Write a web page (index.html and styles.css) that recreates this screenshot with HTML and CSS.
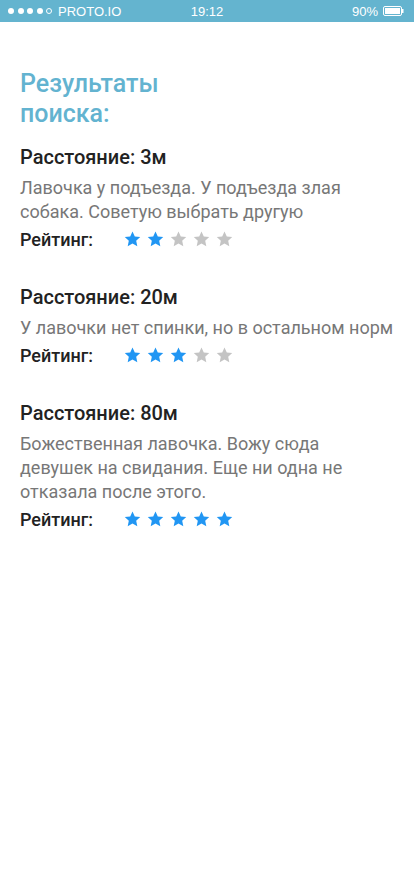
FILE: index.html
```html
<!DOCTYPE html>
<html lang="ru">
<head>
<meta charset="utf-8">
<link rel="stylesheet" href="styles.css">
</head>
<body>
<div class="status">
  <div class="status-left"><span class="dots"><i class="d"></i><i class="d"></i><i class="d"></i><i class="d"></i><i class="d o"></i></span><span class="carrier">PROTO.IO</span></div>
  <div class="status-time">19:12</div>
  <div class="status-right"><span>90%</span><svg class="battery" width="21" height="10" viewBox="0 0 21 10"><rect x="0.5" y="0.5" width="18" height="9" rx="1.5" fill="none" stroke="#fff"/><rect x="2" y="2" width="15" height="6" fill="#fff"/><rect x="19" y="3" width="1.5" height="4" fill="#fff"/></svg></div>
</div>
<main class="content">
  <h1 class="title">Результаты<br>поиска:</h1>
  <section class="item">
    <h2 class="dist">Расстояние: 3м</h2>
    <p class="desc">Лавочка у подъезда. У подъезда злая собака. Советую выбрать другую</p>
    <div class="rating"><span class="label">Рейтинг:</span><span class="stars" data-n="2"></span></div>
  </section>
  <section class="item">
    <h2 class="dist">Расстояние: 20м</h2>
    <p class="desc">У лавочки нет спинки, но в остальном норм</p>
    <div class="rating"><span class="label">Рейтинг:</span><span class="stars" data-n="3"></span></div>
  </section>
  <section class="item">
    <h2 class="dist">Расстояние: 80м</h2>
    <p class="desc">Божественная лавочка. Вожу сюда девушек на свидания. Еще ни одна не отказала после этого.</p>
    <div class="rating"><span class="label">Рейтинг:</span><span class="stars" data-n="5"></span></div>
  </section>
</main>
<script>
document.querySelectorAll('.stars').forEach(function(s){
  var n=+s.dataset.n, h='';
  for(var i=0;i<5;i++){
    h+='<svg class="star '+(i<n?'on':'off')+'" width="17" height="16" viewBox="0 0 24 23"><path d="M12 0.8l3.3 7.1 7.8 0.9-5.8 5.3 1.6 7.7L12 17.9l-6.9 3.9 1.6-7.7L0.9 8.8l7.8-0.9z"/></svg>';
  }
  s.innerHTML=h;
});
</script>
</body>
</html>
```
FILE: styles.css
```css
* { box-sizing: border-box; }
html, body { margin: 0; padding: 0; background: #fff; }
body { font-family: Roboto, "Noto Sans", sans-serif; width: 414px; height: 896px; overflow: hidden; }
.status { height: 22px; background: #64b4cf; color: #fff; display: flex; align-items: center; justify-content: space-between; padding: 0 10px 0 8px; font-family: "Liberation Sans", Arial, sans-serif; font-size: 13px; position: relative; }
.status-left { display: flex; align-items: center; gap: 6px; }
.dots { display: flex; gap: 3.5px; }
.d { width: 6px; height: 6px; border-radius: 50%; background: #fff; display: block; }
.d.o { background: none; border: 1px solid #fff; }
.status-time { position: absolute; left: 0; right: 0; text-align: center; }
.status-right { display: flex; align-items: center; gap: 5px; }
.content { padding: 47px 20px 0 20px; }
.title { margin: 0 0 16px; font-size: 25px; line-height: 30px; font-weight: 500; color: #63b3d0; }
.item { margin-bottom: 34px; }
.dist { margin: 0; font-size: 20px; line-height: 24px; font-weight: 500; color: #222; }
.desc { margin: 7px 0 3px; font-size: 18px; line-height: 24px; color: #777; }
.rating { display: flex; align-items: center; height: 24px; }
.label { font-size: 18px; font-weight: 500; color: #222; width: 104px; }
.stars { display: flex; gap: 6px; }
.star.on { fill: #2196f3; }
.star.off { fill: #c4c4c4; }
```
